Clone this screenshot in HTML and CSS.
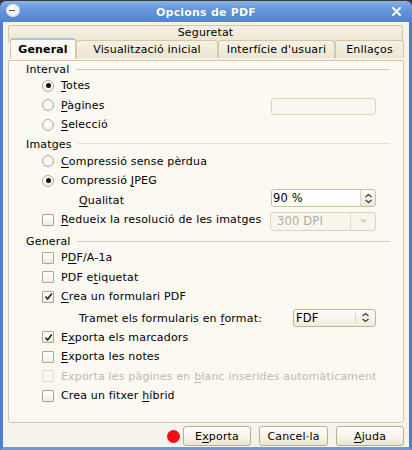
FILE: index.html
```html
<!DOCTYPE html>
<html>
<head>
<meta charset="utf-8">
<link rel="stylesheet" href="styles.css">
</head>
<body>
<div class="win">
  <div class="titlebar">
    <span class="appicon"></span>
    <span class="title">Opcions de PDF</span>
    <span class="close">
      <svg width="9" height="9" viewBox="0 0 9 9"><path d="M1 1L8 8M8 1L1 8" stroke="#fff" stroke-width="2" stroke-linecap="round"/></svg>
    </span>
  </div>
  <div class="frame">
    <div class="tabs">
      <div class="tabrow back"><div class="tab wide">Seguretat</div></div>
      <div class="tabrow front">
        <div class="tab sel">General</div>
        <div class="tab t-vis">Visualització inicial</div>
        <div class="tab t-int">Interfície d'usuari</div>
        <div class="tab t-enl">Enllaços</div>
      </div>
    </div>
    <div class="panel">
      <div class="hdr first"><span>Interval</span><i class="line"></i></div>
      <div class="row"><span class="radio on"></span><span><u>T</u>otes</span></div>
      <div class="row"><span class="radio"></span><span><u>P</u>àgines</span><span class="entry"></span></div>
      <div class="row"><span class="radio"></span><span><u>S</u>elecció</span></div>

      <div class="hdr img"><span>Imatges</span><i class="line light"></i></div>
      <div class="row"><span class="radio"></span><span><u>C</u>ompressió sense pèrdua</span></div>
      <div class="row"><span class="radio on"></span><span>Compressió <u>J</u>PEG</span></div>
      <div class="row indent"><span><u>Q</u>ualitat</span>
        <span class="spin"><span class="spintext">90 %</span><span class="spinbtn">
          <svg width="9" height="11" viewBox="0 0 9 11"><path d="M1.5 4L4.5 1.5L7.5 4M1.5 7L4.5 9.5L7.5 7" fill="none" stroke="#333" stroke-width="1.1"/></svg>
        </span></span>
      </div>
      <div class="row"><span class="check"></span><span><u>R</u>edueix la resolució de les imatges</span>
        <span class="combo dis"><span class="combotext">300 DPI</span><span class="comboarrow">
          <svg width="9" height="6" viewBox="0 0 9 6"><path d="M2 1.5L4.5 4L7 1.5" fill="none" stroke="#c4bcaa" stroke-width="1.1"/></svg>
        </span></span>
      </div>

      <div class="hdr gen"><span>General</span><i class="line"></i></div>
      <div class="row"><span class="check"></span><span>P<u>D</u>F/A-1a</span></div>
      <div class="row"><span class="check"></span><span>PDF e<u>t</u>iquetat</span></div>
      <div class="row"><span class="check on"><svg width="9" height="9" viewBox="0 0 9 9"><path d="M1.5 4.5L3.6 7L7.8 1.5" fill="none" stroke="#222" stroke-width="1.6"/></svg></span><span><u>C</u>rea un formulari PDF</span></div>
      <div class="row indent tramet"><span>Tramet els formularis en <u>f</u>ormat:</span>
        <span class="fdf"><span class="fdftext">FDF</span><span class="fdfarrow">
          <svg width="9" height="11" viewBox="0 0 9 11"><path d="M1.5 4L4.5 1.5L7.5 4M1.5 7L4.5 9.5L7.5 7" fill="none" stroke="#333" stroke-width="1.1"/></svg>
        </span></span>
      </div>
      <div class="row"><span class="check on"><svg width="9" height="9" viewBox="0 0 9 9"><path d="M1.5 4.5L3.6 7L7.8 1.5" fill="none" stroke="#222" stroke-width="1.6"/></svg></span><span>E<u>x</u>porta els marcadors</span></div>
      <div class="row"><span class="check"></span><span><u>E</u>xporta les notes</span></div>
      <div class="row disabled"><span class="check dis"></span><span>Exporta les pàgines en <u>b</u>lanc inserides automàticament</span></div>
      <div class="row"><span class="check"></span><span>Crea un fitxer <u>h</u>íbrid</span></div>
    </div>
    <div class="buttons">
      <span class="reddot"></span>
      <span class="btn b-exp">E<u>x</u>porta</span>
      <span class="btn b-can">Cancel·la</span>
      <span class="btn b-aj"><u>A</u>juda</span>
    </div>
  </div>
</div>
</body>
</html>
```

FILE: styles.css
```css
* { box-sizing: border-box; }
html, body { margin: 0; padding: 0; }
body {
  width: 412px;
  height: 450px;
  overflow: hidden;
  background: #3b3b3b;
  font-family: "DejaVu Sans", "Bitstream Vera Sans", sans-serif;
  font-size: 11px;
  letter-spacing: 0.17px;
  color: #000;
}
u { text-decoration: underline; text-underline-offset: 2px; }
.win {
  height: 450px;
  display: flex;
  flex-direction: column;
  padding-top: 1px;
}
.titlebar {
  height: 21px;
  border-radius: 6px 6px 0 0;
  background: linear-gradient(#8ab2ea, #6696dc 40%, #5183cf 100%);
  display: flex;
  align-items: center;
  position: relative;
  flex: none;
}
.appicon {
  position: absolute;
  left: 6px;
  top: 3px;
  width: 14px;
  height: 13px;
  border-radius: 50%;
  background: radial-gradient(circle at 45% 40%, #ffffff, #e8ecf2 60%, #b7c3d6);
}
.appicon::after {
  content: "";
  position: absolute;
  left: 3px;
  top: 6px;
  width: 6px;
  height: 1px;
  background: #555;
}
.title {
  flex: 1;
  text-align: center;
  color: #fff;
  font-weight: bold;
  font-size: 11px;
  letter-spacing: 0.2px;
  text-shadow: 0 0 1px #3d6db5;
  padding-top: 1px;
}
.close {
  position: absolute;
  right: 11px;
  top: 6px;
  width: 9px;
  height: 9px;
  display: flex;
}
.frame {
  flex: 1;
  background: #f6f3ec;
  border-left: 3px solid #4f7fc9;
  border-right: 3px solid #4f7fc9;
  border-bottom: 3px solid #6e9bd6;
  padding: 3px 5px 0 5px;
  display: flex;
  flex-direction: column;
}
.tabs { height: 35px; flex: none; display: flex; flex-direction: column; }
.tabrow { display: flex; }
.tabrow.back { height: 15px; padding-right: 1px; }
.tab {
  background: linear-gradient(#f6f1e4, #ece5d2);
  border: 1px solid #d6c8a2;
  border-bottom: none;
  border-radius: 3px 3px 0 0;
  display: flex;
  align-items: center;
  justify-content: center;
  white-space: nowrap;
}
.tab.wide { flex: 1; height: 17px; padding-bottom: 3px; }
.tabrow.front { height: 20px; margin-top: -2px; align-items: flex-end; position: relative; }
.tab.sel {
  margin-left: 2px;
  width: 66px;
  font-weight: bold;
  background: #fbf9f2;
  border-top: 2px solid #a9c1e4;
  position: relative;
  z-index: 2;
  margin-bottom: -1px;
  height: 21px;
  padding-bottom: 1px;
}
.tab.t-vis { width: 142px; height: 18px; }
.tab.t-int { width: 117px; height: 18px; }
.tab.t-enl { width: 69px; height: 18px; }
.panel {
  height: 363px;
  flex: none;
  background: #fbf9f2;
  border: 1px solid #d6c8a2;
  border-radius: 0 0 3px 3px;
  padding-top: 2px;
  display: flex;
  flex-direction: column;
}
.hdr {
  height: 12.5px;
  display: flex;
  align-items: center;
  padding-left: 17px;
  padding-right: 13px;
  margin-top: 3px;
  flex: none;
}
.hdr.first { margin-top: 0.5px; }
.hdr.img { margin-top: 3.5px; margin-bottom: 1px; }
.hdr.gen { margin-top: 6px; }
.hdr .line {
  flex: 1;
  height: 1px;
  margin-left: 6px;
  margin-top: -1px;
  background: #cfcabc;
}
.hdr .line.light { background: #e1ddd2; }
.row {
  height: 19.5px;
  display: flex;
  align-items: center;
  padding-left: 33px;
  padding-right: 27px;
  flex: none;
  white-space: nowrap;
}
.row.indent { padding-left: 70px; }
.row.tramet { height: 21px; padding-top: 2px; }
.row.disabled { color: #c0b9a9; }
.radio {
  width: 12px;
  height: 12px;
  border-radius: 50%;
  border: 1px solid #b7aa8a;
  background: radial-gradient(circle at 40% 35%, #ffffff, #f1ede3);
  margin-right: 7px;
  display: flex;
  align-items: center;
  justify-content: center;
  flex: none;
}
.radio.on::after {
  content: "";
  width: 5px;
  height: 5px;
  border-radius: 50%;
  background: #111;
}
.check {
  width: 12px;
  height: 12px;
  border: 1px solid #b0a584;
  border-radius: 1px;
  background: linear-gradient(#ffffff, #f1ede3);
  margin-right: 7px;
  display: flex;
  align-items: center;
  justify-content: center;
  flex: none;
}
.check.dis { border-color: #e2dbc8; background: #faf7f0; }
.entry {
  margin-left: auto;
  width: 105px;
  height: 17px;
  border: 1px solid #e1d3ac;
  border-radius: 3px;
  background: #faf7f0;
  margin-top: 3px;
}
.spin {
  margin-left: auto;
  width: 105px;
  height: 18px;
  display: flex;
  border: 1px solid #cdbf99;
  border-radius: 3px;
  background: #fff;
  overflow: hidden;
  margin-top: -4px;
}
.spintext { flex: 1; padding-left: 1px; display: flex; align-items: center; font-size: 11.5px; }
.spinbtn {
  width: 15px;
  border-left: 1px solid #ddd3b8;
  background: linear-gradient(#fdfcf8, #ece6d6);
  display: flex;
  align-items: center;
  justify-content: center;
}
.combo {
  margin-left: auto;
  width: 106px;
  height: 19px;
  display: flex;
  border: 1px solid #e0d3b0;
  border-radius: 3px;
  background: #f8f5ed;
  margin-top: 3px;
  overflow: hidden;
}
.combotext { flex: 1; padding-left: 6px; display: flex; align-items: center; color: #b4ad9d; font-size: 11.5px; }
.comboarrow {
  width: 25px;
  border-left: 1px solid #e6dcc2;
  display: flex;
  align-items: center;
  justify-content: center;
}
.fdf {
  margin-left: auto;
  width: 83px;
  height: 18px;
  display: flex;
  border: 1px solid #c6b58c;
  border-radius: 3px;
  background: linear-gradient(#fefdfa, #f1ecde);
  margin-top: -1px;
  overflow: hidden;
}
.fdftext { flex: 1; padding-left: 2px; display: flex; align-items: center; font-size: 11.5px; }
.fdfarrow {
  width: 20px;
  border-left: 1px solid #e3dac3;
  margin: 2px 0;
  display: flex;
  align-items: center;
  justify-content: center;
}
.buttons {
  display: flex;
  align-items: center;
  justify-content: flex-end;
  height: 20px;
  margin-top: 3px;
  padding-right: 0;
  flex: none;
}
.reddot {
  width: 13px;
  height: 13px;
  border-radius: 50%;
  background: #f10f0f;
  margin-right: 3px;
}
.btn {
  height: 20px;
  border: 1px solid #bcae88;
  border-radius: 3px;
  background: linear-gradient(#ffffff, #f7f3e8 60%, #ebe4d0);
  display: flex;
  align-items: center;
  justify-content: center;
}
.b-exp { width: 68px; }
.b-can { width: 69px; margin-left: 8px; }
.b-aj { width: 68px; margin-left: 8px; }
```
